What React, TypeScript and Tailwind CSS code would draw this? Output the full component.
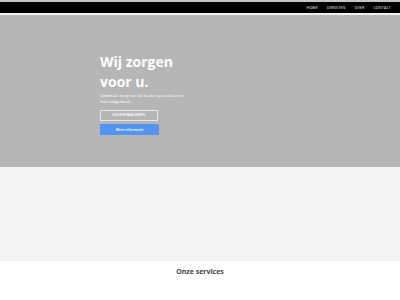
export default function App() {
  const nav = ['HOME', 'DIENSTEN', 'OVER', 'CONTACT'];
  return (
    <div className="w-[400px] h-[300px] overflow-hidden bg-white font-['Open_Sans',sans-serif]">
      <div className="h-[2px] bg-[#c6c6c6]" />
      <header className="h-[11px] bg-black flex items-center justify-end gap-[9px] pr-[9px]">
        {nav.map((n) => (
          <span key={n} className="text-[3.5px] font-semibold text-[#d0d0d0] tracking-[0.2px]">
            {n}
          </span>
        ))}
      </header>
      <div className="h-[2px] bg-[#f0f0f0]" />
      <section className="h-[152px] bg-[#b6b6b6] pl-[100px] pt-[37px]">
        <h1 className="text-[14px] leading-[20px] font-bold text-white">
          Wij zorgen
          <br />
          voor u.
        </h1>
        <p className="w-[88px] text-[4.3px] leading-[6px] text-white">
          Optimale zorg van de beste specialisten in hun vakgebied.
        </p>
        <div className="mt-[6px] w-[58px] h-[11px] border border-[#e8e8e8] flex items-center justify-center text-[3px] font-semibold text-white">
          EEN AFSPRAAK MAKEN
        </div>
        <div className="mt-[3px] w-[59px] h-[11px] bg-[#5594f3] flex items-center justify-center text-[3.5px] font-semibold text-white">
          Meer informatie
        </div>
      </section>
      <section className="h-[94px] bg-[#f3f3f3]" />
      <section className="pt-[6px] text-center">
        <h2 className="text-[7px] font-bold text-[#444]">Onze services</h2>
      </section>
    </div>
  );
}
